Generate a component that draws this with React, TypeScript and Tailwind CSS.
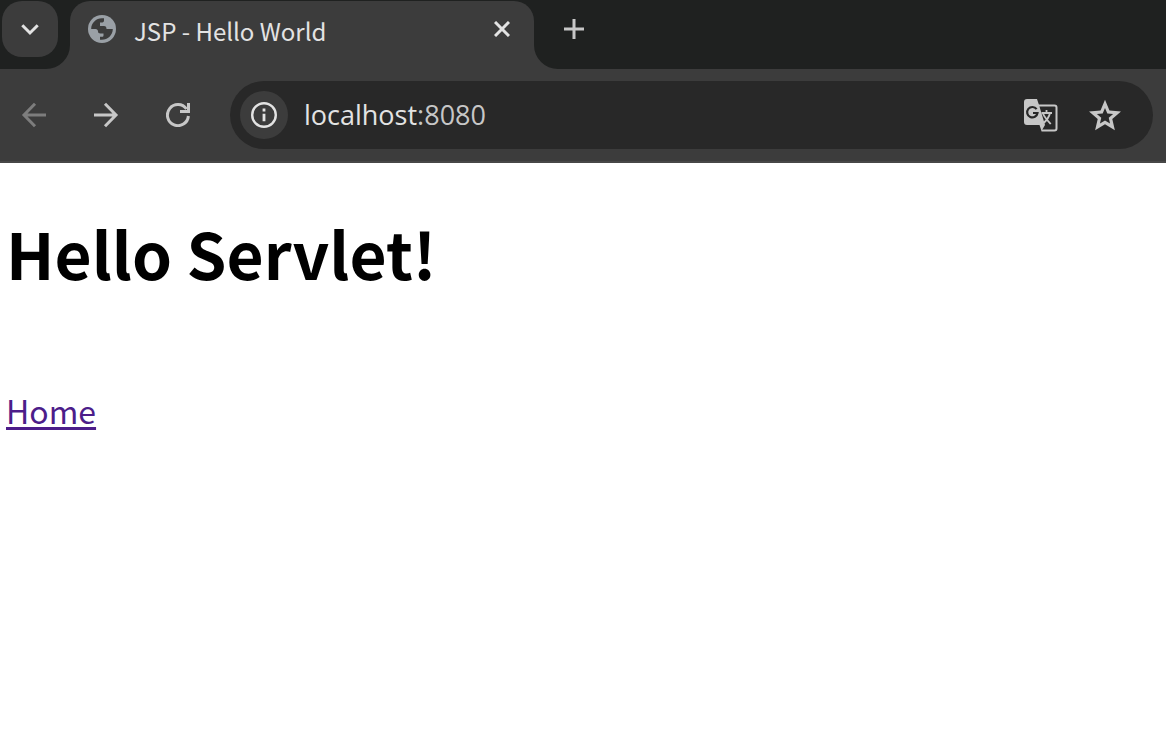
import React from "react";

function TabBar() {
  return (
    <div className="flex h-[69px] items-start bg-[#1f2120] pt-px">
      <div className="pl-0.5">
        <button
          aria-label="Search tabs"
          className="flex size-14 items-center justify-center rounded-[20px] bg-[#3c3c3c]"
        >
          <svg width="20" height="20" viewBox="0 0 20 20" fill="none" stroke="#e3e3e3" strokeWidth="3">
            <path d="M2.3 6.3 10 14l7.7-7.7" />
          </svg>
        </button>
      </div>
      <div className="relative ml-3 flex h-[68px] w-[464px] items-start rounded-t-[20px] bg-[#3c3c3c] pr-5 pl-4">
        <svg className="absolute bottom-0 -left-6" width="24" height="24" viewBox="0 0 24 24" fill="#3c3c3c">
          <path d="M24 0v24H0A24 24 0 0 0 24 0z" />
        </svg>
        <svg className="absolute -right-6 bottom-0" width="24" height="24" viewBox="0 0 24 24" fill="#3c3c3c">
          <path d="M0 0v24h24A24 24 0 0 1 0 0z" />
        </svg>
        <div className="flex h-14 w-full items-center">
          <svg className="ml-0.5 shrink-0" width="28" height="28" viewBox="0 0 28 28">
            <circle cx="14" cy="14" r="14" fill="#9aa0a6" />
            <path
              d="M3.2 14C3.2 8 8 3.2 14 3.2h2v2.3c0 1.400-1 2-2.500 2h-1.500v3.500h4c1.800 0 2.500 1 2.500 3h6.300c0 6-5 10.800-11 10.800h-1.800v-3h2c1 0 1.500-.6 1.500-1.600v-1.600h-3c-1.700 0-2.500-1-2.500-2.300s-1-2.300-2.300-2.300z"
              fill="#3c3c3c"
            />
          </svg>
          <span className="ml-[18px] grow pt-1 font-['Noto_Sans_CJK_KR',sans-serif] text-[24px] leading-8 text-[#e3e3e3]">
            JSP - Hello World
          </span>
          <button aria-label="Close tab" className="flex size-6 items-center justify-center">
            <svg width="16" height="16" viewBox="0 0 16 16" stroke="#e3e3e3" strokeWidth="3">
              <path d="m1 1 14 14M15 1 1 15" />
            </svg>
          </button>
        </div>
      </div>
      <button aria-label="New tab" className="ml-5 flex h-14 w-10 items-center justify-center">
        <svg width="20" height="20" viewBox="0 0 20 20" stroke="#c7c7c7" strokeWidth="3">
          <path d="M10 0v20M0 10h20" />
        </svg>
      </button>
    </div>
  );
}

function Toolbar() {
  return (
    <div className="flex h-[94px] items-center border-b-2 border-[#474747] bg-[#3c3c3c] pr-[13px] pl-4">
      <div className="flex gap-9">
        <button aria-label="Back" disabled className="flex size-9 items-center justify-center">
          <svg width="26" height="26" viewBox="0 0 26 26" fill="none" stroke="#7d7d7d" strokeWidth="3">
            <path d="M25 13H3M14 1.800 3 13l11 11.200" />
          </svg>
        </button>
        <button aria-label="Forward" className="flex size-9 items-center justify-center">
          <svg width="26" height="26" viewBox="0 0 26 26" fill="none" stroke="#c7c7c7" strokeWidth="3">
            <path d="M1 13h22M12 1.800 23 13 12 24.200" />
          </svg>
        </button>
        <button aria-label="Reload" className="flex size-9 items-center justify-center">
          <svg width="24" height="24" viewBox="0 0 24 24" fill="none" stroke="#c7c7c7" strokeWidth="3">
            <path d="M22.400 13A10.500 10.500 0 1 1 20.500 6M22.500 0v8.500H14" />
          </svg>
        </button>
      </div>
      <div className="ml-[34px] flex h-[68px] grow items-center rounded-full bg-[#282828] pr-8 pl-2.5">
        <button
          aria-label="View site information"
          className="flex size-12 items-center justify-center rounded-full bg-[#3c3c3c]"
        >
          <svg width="26" height="26" viewBox="0 0 26 26" fill="none" stroke="#e3e3e3">
            <circle cx="13" cy="13" r="11.800" strokeWidth="2.400" />
            <path d="M13 11.800v7.400M13 6.500v3" strokeWidth="2.800" />
          </svg>
        </button>
        <div className="ml-4 grow font-['Open_Sans',sans-serif] text-[27px] leading-9 text-[#e3e3e3]">
          localhost<span className="text-[#c7c7c7]">:8080</span>
        </div>
        <button aria-label="Translate this page">
          <svg width="34" height="34" viewBox="0 0 34 34">
            <path d="M14 7.500h16.500q2 0 2 2v21q0 2-2 2H17.500" fill="none" stroke="#c7c7c7" strokeWidth="2" />
            <path d="M3 1h10l2 6 6 20-3.500 6-2-6H3q-3 0-3-3V4q0-3 3-3z" fill="#c7c7c7" />
            <path d="M12.600 11.200A5.200 5.200 0 1 0 13.500 15H9" fill="none" stroke="#282828" strokeWidth="2.200" />
            <path d="M17.500 15H28M22.500 12v3M26 15c-1 5-4 8-7 10.500M19 15.500c1.500 4 4.500 7 7.800 10.500" fill="none" stroke="#c7c7c7" strokeWidth="1.800" />
          </svg>
        </button>
        <button aria-label="Bookmark this tab" className="ml-[31px]">
          <svg width="32" height="32" viewBox="2 1.500 20 20" fill="#c7c7c7">
            <path
              fillRule="evenodd"
              d="m8.850 16.825 3.150-1.900 3.150 1.925-.825-3.600 2.775-2.400-3.650-.325-1.450-3.400-1.450 3.375-3.650.325 2.775 2.425zM5.825 21l1.625-7.025L2 9.250l7.200-.625L12 2l2.800 6.625 7.200.625-5.450 4.725L18.175 21 12 17.275z"
            />
          </svg>
        </button>
      </div>
    </div>
  );
}

export default function App() {
  return (
    <div className="flex min-h-screen flex-col bg-white">
      <header>
        <TabBar />
        <Toolbar />
      </header>
      <main className="px-1.5 pt-[43px] font-['Noto_Sans_CJK_KR',sans-serif] text-black">
        <h1 className="text-[64px] leading-[92px] font-bold">Hello Servlet!</h1>
        <p className="mt-[88px] text-[32px] leading-[48px]">
          <a href="#home" className="text-[#4c1d8a] underline decoration-3 underline-offset-3">
            Home
          </a>
        </p>
      </main>
    </div>
  );
}
